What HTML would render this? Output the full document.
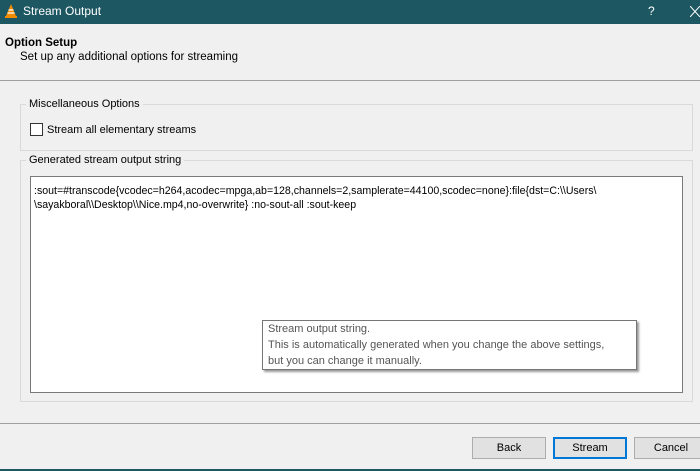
<!DOCTYPE html><html><head><style>
body{margin:0;width:700px;height:471px;overflow:hidden;background:#f0f0f0;font-family:"Liberation Sans",sans-serif;font-size:11px;color:#000;position:relative}
.a{position:absolute}
.t{white-space:nowrap}
</style></head><body>
<div class="a" style="left:0;top:0;width:700px;height:24px;background:#1d5762"></div>
<svg class="a" style="left:3px;top:3px" width="16" height="16" viewBox="0 0 16 16"><path d="M8 1 L13 13 H3 Z" fill="#f28b00"/><path d="M5.5 7h5M4.5 10h7" stroke="#fff" stroke-width="1.3"/><rect x="2" y="13" width="12" height="2" fill="#f28b00"/></svg>
<div class="a t" style="left:23px;top:4px;color:#fff;font-size:12px">Stream Output</div>
<div class="a t" style="left:648px;top:4px;color:#fff;font-size:12px">?</div>
<svg class="a" style="left:690px;top:6px" width="10" height="11"><path d="M0 0L10 11M10 0L0 11" stroke="#fff" stroke-width="1"/></svg>
<div class="a t" style="left:5px;top:37px;font-weight:bold;font-size:11.5px">Option Setup</div>
<div class="a t" style="left:20px;top:51px;font-size:11.5px">Set up any additional options for streaming</div>
<div class="a" style="left:0;top:80px;width:700px;height:1px;background:#a0a0a0"></div>
<div class="a" style="left:20px;top:104px;width:671px;height:45px;border:1px solid #d9d9d9"></div>
<div class="a t" style="left:26px;top:98px;background:#f0f0f0;padding:0 3px">Miscellaneous Options</div>
<div class="a" style="left:30px;top:123px;width:11px;height:11px;border:1px solid #333;background:#fff"></div>
<div class="a t" style="left:47px;top:124px">Stream all elementary streams</div>
<div class="a" style="left:20px;top:160px;width:671px;height:240px;border:1px solid #d9d9d9"></div>
<div class="a t" style="left:26px;top:154px;background:#f0f0f0;padding:0 3px">Generated stream output string</div>
<div class="a" style="left:30px;top:176px;width:651px;height:215px;border:1px solid #7a7a7a;background:#fff"></div>
<div class="a t" style="left:34px;top:184px;font-size:10.6px;line-height:14px">:sout=#transcode{vcodec=h264,acodec=mpga,ab=128,channels=2,samplerate=44100,scodec=none}:file{dst=C:\\Users\<br>\sayakboral\\Desktop\\Nice.mp4,no-overwrite} :no-sout-all :sout-keep</div>
<div class="a" style="left:262px;top:320px;width:373px;height:48px;border:1px solid #767676;background:#fff;box-shadow:2px 2px 2px #999"></div>
<div class="a t" style="left:268px;top:321px;color:#555;line-height:16px;font-size:11px">Stream output string.<br>This is automatically generated when you change the above settings,<br>but you can change it manually.</div>
<div class="a" style="left:0;top:423px;width:700px;height:1px;background:#a0a0a0"></div>
<div class="a" style="left:472px;top:437px;width:72px;height:20px;border:1px solid #adadad;background:#e1e1e1;text-align:center;line-height:20px">Back</div>
<div class="a" style="left:553px;top:437px;width:70px;height:18px;border:2px solid #0078d7;background:#e1e1e1;text-align:center;line-height:18px">Stream</div>
<div class="a" style="left:634px;top:437px;width:72px;height:20px;border:1px solid #adadad;background:#e1e1e1;text-align:center;line-height:20px">Cancel</div>
<div class="a" style="left:0;top:469px;width:700px;height:2px;background:#1d5762"></div>
</body></html>
